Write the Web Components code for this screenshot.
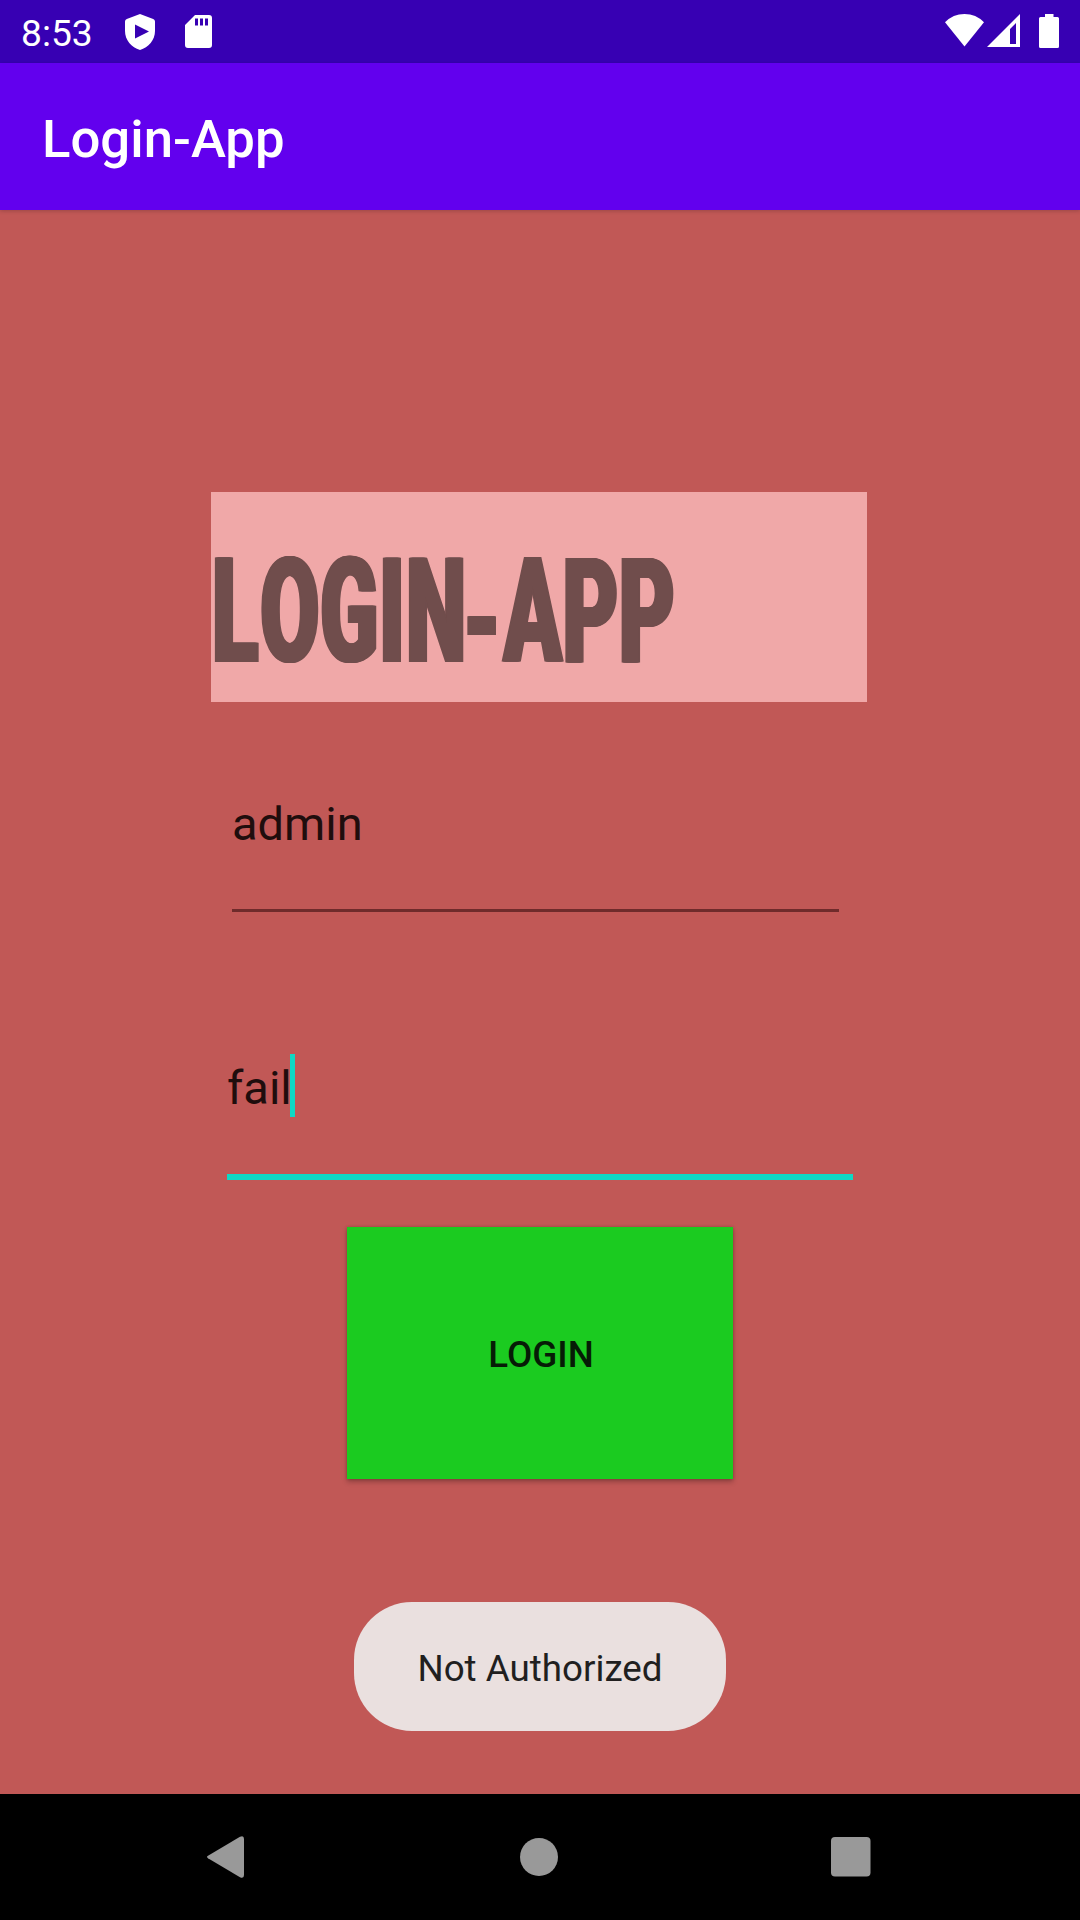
<!DOCTYPE html>
<html lang="en">
<head>
<meta charset="utf-8">
<title>Login-App</title>
<style>
html,body{margin:0;padding:0}
body{width:1080px;height:1920px;overflow:hidden;font-family:Roboto,"Noto Sans",sans-serif}
</style>
</head>
<body>
<login-screen></login-screen>
<script>
const define = (name, html, ready) => customElements.define(name, class extends HTMLElement {
  constructor() {
    super();
    this.attachShadow({mode: 'open'}).innerHTML = html;
  }
  connectedCallback() {
    if (ready) ready(this.shadowRoot);
  }
});

define('status-bar', `<style>
:host{display:flex;box-sizing:border-box;height:63px;padding:0 21px 0 21px;background:#3700b3;color:#fff;align-items:flex-start}
.time{font-size:37.2px;line-height:67px;height:63px;width:104px}
svg{display:block;fill:#fff}
.space{flex:1}
</style>
<span class="time">8:53</span>
<svg width="30" height="36" viewBox="0 0 30 36" style="margin-top:14px"><path fill-rule="evenodd" d="M15 0 28.2 5Q30 5.700 30 7.500V17C30 26 23.500 33.500 15 36C6.500 33.500 0 26 0 17V7.500Q0 5.700 1.800 5ZM10 10.500V24.500L24 17.500Z"/></svg>
<svg width="27" height="33" viewBox="0 0 27 33" style="margin:15px 0 0 30px"><path fill-rule="evenodd" d="M10 0H24Q27 0 27 3V30Q27 33 24 33H3Q0 33 0 30V10ZM10 3.500V10.500H13V3.500ZM15 3.500V10.500H18V3.500ZM20 3.500V10.500H23V3.500Z"/></svg>
<span class="space"></span>
<svg width="39" height="33" viewBox="0 0 39 33" style="margin-top:14px"><path d="M0 8.300Q8 0 19.500 0T39 8.300L19.500 32.500Z"/></svg>
<svg width="33" height="33" viewBox="0 0 33 33" style="margin:14px 19px 0 3px"><path fill-rule="evenodd" d="M0 33 33 0V33ZM23 30H29V9L23 15Z"/></svg>
<svg width="20" height="34" viewBox="0 0 20 34" style="margin-top:14px"><path d="M6 0H14.500V3H18.500Q20 3 20 4.500V32.500Q20 34 18.500 34H1.500Q0 34 0 32.500V4.500Q0 3 1.500 3H6Z"/></svg>`);

define('app-bar', `<style>
:host{display:block;box-sizing:border-box;height:147px;padding:5px 42px 0;background:#6200ee;color:#fff;font-size:52.7px;font-weight:500;line-height:142px;box-shadow:0 1px 4px rgba(0,0,0,.2);z-index:1}
</style><slot></slot>`);

// The headline is a heavy face condensed to a fixed width, with its stems thickened sideways.
define('title-banner', `<style>
:host{display:block;width:656px;height:210px;background:#f0a8a8}
.word{display:inline-block;white-space:nowrap;transform-origin:0 0;font-family:Roboto,sans-serif;font-weight:900;font-size:146px;line-height:172px;margin:35px 0 0 1px;color:#704d4c;text-shadow:3px 0 #704d4c,-3px 0 #704d4c,1.500px 0 #704d4c,-1.500px 0 #704d4c;font-kerning:none}
.l{letter-spacing:3px}.o{letter-spacing:1px}.i{letter-spacing:2px}.n{letter-spacing:-6px}.h{letter-spacing:4px;vertical-align:-9px;line-height:100px}.p{letter-spacing:1px}
</style>
<span class="word"><span class="l">L</span><span class="o">OG</span><span class="i">I</span><span class="n">N</span><span class="h">-</span><span class="p">APP</span></span>`, root => {
  const word = root.querySelector('.word');
  word.style.transform = `scaleX(${463 / word.offsetWidth})`;
});

define('text-field', `<style>
:host{display:flex;flex-direction:column;box-sizing:border-box;color:#1f0d0d;font-size:47px}
.row{display:flex;align-items:center;height:63px}
.text{display:block;padding-bottom:1px}
.caret{display:none;width:5px;height:63px;margin-left:-2px;background:#0fd8c4}
.line{height:2.600px;margin-top:54px;background:#6f2b2b}
:host([focused]) .text{padding:4px 0 0}
:host([focused]) .caret{display:block}
:host([focused]) .line{height:6px;margin-top:57px;background:#0fd8c4}
</style>
<div class="row"><span class="text"><slot></slot></span><i class="caret"></i></div><div class="line"></div>`);

define('login-button', `<style>
:host{display:flex;box-sizing:border-box;width:386px;height:252px;padding:4px 0 0 2px;align-items:center;justify-content:center;background:#1bcb20;color:#061c06;font-size:36.75px;font-weight:500;box-shadow:0 3px 5px rgba(0,0,0,.25),0 0 3px rgba(0,0,0,.2)}
</style><slot></slot>`);

define('toast-message', `<style>
:host{display:flex;box-sizing:border-box;width:372px;height:129px;padding-top:4px;border-radius:58px;align-items:center;justify-content:center;background:#eae0df;color:#211f1f;font-size:36.75px}
</style><slot></slot>`);

define('nav-bar', `<style>
:host{display:flex;box-sizing:border-box;height:126px;background:#000;align-items:center;padding:0 209px 0 206px;justify-content:space-between}
svg{display:block;fill:#999}
</style>
<svg width="39" height="44" viewBox="0 0 39 44"><path d="M2 20.800 34 1.800Q38 0 38 4V40Q38 44 34 42.200L2 23.200Q0 22 2 20.800Z"/></svg>
<svg width="40" height="40" viewBox="0 0 40 40"><circle cx="21" cy="20" r="19"/></svg>
<svg width="40" height="40" viewBox="0 0 40 40"><rect width="39.500" height="39.500" rx="4"/></svg>`);

define('login-screen', `<style>
:host{display:flex;flex-direction:column;height:1920px;background:#c15856}
main{flex:1;display:flex;flex-direction:column;align-items:flex-start}
title-banner{margin:282px 0 0 211px}
.user{width:607px;margin:90px 0 0 232px}
.pass{width:626px;margin:142px 0 0 227px}
login-button{margin:47px 0 0 347px}
toast-message{margin:123px 0 0 354px}
</style>
<status-bar></status-bar>
<app-bar>Login-App</app-bar>
<main>
<title-banner></title-banner>
<text-field class="user">admin</text-field>
<text-field class="pass" focused>fail</text-field>
<login-button>LOGIN</login-button>
<toast-message>Not Authorized</toast-message>
</main>
<nav-bar></nav-bar>`);
</script>
</body>
</html>
